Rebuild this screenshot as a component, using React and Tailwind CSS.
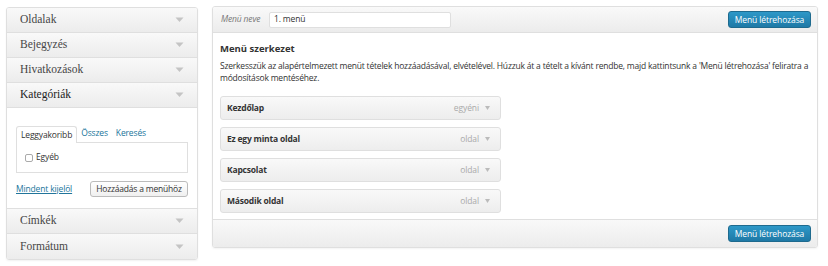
import React from "react";

const sans = "font-['Open_Sans','Noto_Sans',sans-serif]";
const serif = "font-['Liberation_Serif','DejaVu_Serif',serif]";

function Arrow() {
  return (
    <svg width="9" height="6" viewBox="0 0 9 6" className="shrink-0">
      <path d="M0.5 0.5 L8.5 0.5 L4.5 5 Z" fill="#c4c4c4" />
    </svg>
  );
}

function SideRow({ label, active, last }) {
  return (
    <div
      className={`flex h-[25px] items-center justify-between bg-gradient-to-b from-[#f9f9f9] to-[#ececec] pl-[13px] pr-[13px] ${
        last ? "" : "border-b border-[#dfdfdf]"
      } ${serif} text-[11.5px] ${active ? "text-[#222]" : "text-[#464646]"}`}
    >
      <span>{label}</span>
      <Arrow />
    </div>
  );
}

function BlueButton() {
  return (
    <button
      className={`h-[17px] w-[83px] rounded-[3px] border border-[#1e6a8e] bg-gradient-to-b from-[#2d98c8] to-[#1f79a6] text-[8.5px] leading-[15px] tracking-[-0.1px] text-white ${sans}`}
    >
      Menü létrehozása
    </button>
  );
}

function MenuItem({ title, type }) {
  return (
    <div className="flex h-[24px] w-[281px] items-center justify-between rounded-[3px] border border-[#dfdfdf] bg-gradient-to-b from-[#f9f9f9] to-[#ededed] pl-[6px] pr-[10px]">
      <span className="text-[8.5px] font-bold tracking-[-0.2px] text-[#333]">{title}</span>
      <span className="flex items-center gap-[6px] text-[8.5px] tracking-[-0.1px] text-[#aaa]">
        {type}
        <svg width="5" height="4" viewBox="0 0 5 4">
          <path d="M0 0 L5 0 L2.5 4 Z" fill="#bbb" />
        </svg>
      </span>
    </div>
  );
}

export default function App() {
  return (
    <div className={`flex h-[266px] w-[828px] items-start gap-[14px] bg-white pl-[6px] pt-[6px] ${sans}`}>
      <div className="mt-[1px] w-[192px] overflow-hidden rounded-[3px] border border-[#dfdfdf] shadow-[0_1px_2px_rgba(0,0,0,0.06)]">
        <SideRow label="Oldalak" />
        <SideRow label="Bejegyzés" />
        <SideRow label="Hivatkozások" />
        <SideRow label="Kategóriák" active />
        <div className="border-b border-[#dfdfdf] bg-white px-[9px] pb-[11px] pt-[17px] text-[8.5px] tracking-[-0.15px]">
          <div className="flex h-[17px] items-end">
            <div className="relative -mb-px flex h-[17px] items-center rounded-t-[3px] border border-b-0 border-[#dfdfdf] bg-white px-[4px] text-[#333]">
              Leggyakoribb
            </div>
            <span className="ml-[4px] self-center text-[#21759b]">Összes</span>
            <span className="ml-[8px] self-center text-[#21759b]">Keresés</span>
          </div>
          <div className="flex h-[31px] items-center border border-[#dfdfdf] pl-[8px] text-[#333]">
            <span className="mr-[3px] inline-block h-[8px] w-[8px] rounded-[2px] border border-[#aaa] bg-white" />
            Egyéb
          </div>
          <div className="mt-[8px] flex items-center justify-between">
            <span className="text-[#21759b] underline">Mindent kijelöl</span>
            <button className="h-[16px] w-[98px] rounded-[3px] border border-[#bbb] bg-gradient-to-b from-white to-[#f0f0f0] tracking-[-0.2px] text-[#333]">
              Hozzáadás a menühöz
            </button>
          </div>
        </div>
        <SideRow label="Címkék" />
        <SideRow label="Formátum" last />
      </div>

      <div className="w-[606px] overflow-hidden rounded-[3px] border border-[#dfdfdf] shadow-[0_1px_2px_rgba(0,0,0,0.05)]">
        <div className="flex h-[26px] items-center justify-between border-b border-[#dfdfdf] bg-gradient-to-b from-[#f9f9f9] to-[#ececec] pl-[8px] pr-[6px]">
          <div className="flex items-center text-[8.5px] tracking-[-0.15px]">
            <span className="w-[48px] italic text-[#777]">Menü neve</span>
            <div className="flex h-[16px] w-[182px] items-center rounded-[2px] border border-[#dfdfdf] bg-white pl-[4px] text-[#333]">
              1. menü
            </div>
          </div>
          <BlueButton />
        </div>
        <div className="bg-white pb-[6px] pl-[7px] pr-[8px] pt-[9px]">
          <h3 className="text-[9.5px] font-bold leading-[14px] text-[#333]">Menü szerkezet</h3>
          <p className="mt-[4px] text-[8.5px] leading-[12px] tracking-[-0.2px] text-[#333]">
            Szerkesszük az alapértelmezett menüt tételek hozzáadásával, elvételével. Húzzuk át a tételt a kívánt rendbe, majd kattintsunk a 'Menü létrehozása' feliratra a módosítások mentéséhez.
          </p>
          <div className="mt-[12px] flex flex-col gap-[7px]">
            <MenuItem title="Kezdőlap" type="egyéni" />
            <MenuItem title="Ez egy minta oldal" type="oldal" />
            <MenuItem title="Kapcsolat" type="oldal" />
            <MenuItem title="Második oldal" type="oldal" />
          </div>
        </div>
        <div className="flex h-[28px] items-center justify-end border-t border-[#dfdfdf] bg-gradient-to-b from-[#f9f9f9] to-[#ececec] pr-[6px]">
          <BlueButton />
        </div>
      </div>
    </div>
  );
}
